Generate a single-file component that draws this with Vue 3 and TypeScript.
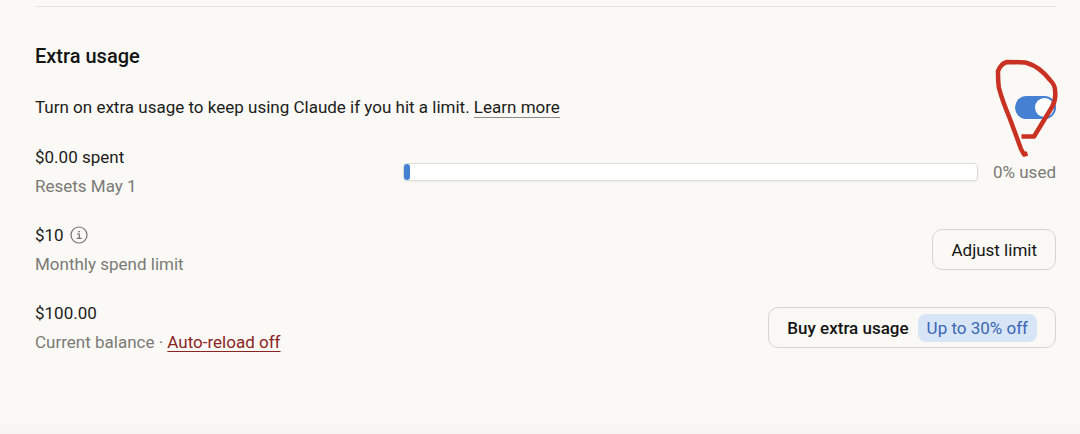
<script setup lang="ts">
import { ref } from 'vue'

const enabled = ref<boolean>(true)
const percentUsed = ref<number>(0)
</script>

<template>
  <main class="page">
    <section class="usage" aria-labelledby="usage-title">
      <h2 id="usage-title" class="title">Extra usage</h2>

      <div class="row intro">
        <p id="usage-desc" class="text">
          Turn on extra usage to keep using Claude if you hit a limit.
          <a class="learn" href="#learn">Learn more</a>
        </p>
        <div class="toggle">
          <input v-model="enabled" class="switch" type="checkbox" role="switch" aria-labelledby="usage-title" aria-describedby="usage-desc" />
          <svg class="scribble" viewBox="0 0 70 104" aria-hidden="true">
            <path
              d="M30.500 77.500 H43 L61 48 C64 43 65 38 64 31 C64 27 62 24 59 21 C52 12 43 6 36 4 C31 3 24 3 16 3 C12 4 9 7 7 12 C7 18 7 24 8 29 C10 37 14 48 19 60 L30 90 L33 95.500 L36.500 94.500"
              class="stroke-main"
            />
          </svg>
        </div>
      </div>

      <div class="row">
        <div class="info spent">
          <p class="text">$0.00 spent</p>
          <p class="text muted">Resets May 1</p>
        </div>
        <div class="meter" role="progressbar" aria-label="Extra usage spent" :aria-valuenow="percentUsed" aria-valuemin="0" aria-valuemax="100">
          <div class="fill" :style="{ width: percentUsed + '%' }"></div>
        </div>
        <span class="text muted used">{{ percentUsed }}% used</span>
      </div>

      <div class="row">
        <div class="info">
          <p class="text amount">
            $10
            <button class="hint" type="button" aria-label="About the monthly spend limit">
              <svg viewBox="0 0 18 18" aria-hidden="true">
                <circle cx="9" cy="9" r="8" />
                <path d="M7 8 H9.3 V12.3 M6.7 12.4 H11.6" />
                <circle class="dot" cx="9" cy="5.6" r="0.9" />
              </svg>
            </button>
          </p>
          <p class="text muted">Monthly spend limit</p>
        </div>
        <button class="btn" type="button">Adjust limit</button>
      </div>

      <div class="row">
        <div class="info">
          <p class="text">$100.00</p>
          <p class="text muted">Current balance · <a class="reload" href="#auto-reload">Auto-reload off</a></p>
        </div>
        <button class="btn buy" type="button">
          Buy extra usage
          <span class="offer">Up to 30% off</span>
        </button>
      </div>
    </section>
  </main>
</template>

<style>
body {
  margin: 0;
  background: #faf9f5;
}
</style>

<style scoped>
.page {
  box-sizing: border-box;
  min-height: 100vh;
  padding: 6px 24px 24px 35px;
  background: linear-gradient(to top, #f6f5f1, #faf9f5 16px);
  color: #1c1c1a;
  font-family: Roboto, "Noto Sans", sans-serif;
  font-size: 17px;
  line-height: 24px;
}
.usage {
  display: flex;
  flex-direction: column;
  gap: 25px;
  padding-top: 36px;
  border-top: 1px solid #e5e4df;
}
.title {
  margin: 0;
  font-size: 20px;
  font-weight: 500;
  line-height: 26px;
  color: #141413;
}
.text {
  margin: 0;
}
.row {
  display: flex;
  align-items: center;
  justify-content: space-between;
}
.intro {
  height: 26px;
}
.learn {
  color: inherit;
  text-decoration: none;
  border-bottom: 1px solid #8c8b86;
}
.toggle {
  position: relative;
  display: flex;
}
.switch {
  appearance: none;
  width: 41px;
  height: 23px;
  margin: 0;
  border-radius: 12px;
  background: #b9b8b2;
}
.switch::before {
  content: "";
  display: block;
  width: 19px;
  height: 19px;
  margin: 2px;
  border-radius: 50%;
  background: #ffffff;
}
.switch:checked {
  background: #4580d2;
}
.switch:checked::before {
  margin-left: 20px;
}
.scribble {
  position: absolute;
  top: -37px;
  right: -5px;
  width: 70px;
  height: 104px;
  pointer-events: none;
}
.stroke-main {
  fill: none;
  stroke: #c93222;
  stroke-width: 4.5;
  stroke-linecap: butt;
  stroke-linejoin: round;
}
.info {
  display: flex;
  flex-direction: column;
  gap: 5px;
}
.spent {
  width: 36%;
}
.muted {
  color: #7b7a75;
}
.meter {
  flex: 1;
  height: 16px;
  border: 1px solid #dddcd8;
  border-radius: 4px;
  background: #ffffff;
  box-shadow: 0 1px 2px #00000010;
}
.fill {
  min-width: 6px;
  height: 16px;
  border-radius: 3px;
  background: #4580d2;
}
.used {
  margin-left: 15px;
}
.amount {
  display: flex;
  align-items: center;
  gap: 6px;
}
.hint {
  display: flex;
  padding: 0;
  border: 0;
  background: none;
}
.hint svg {
  width: 18px;
  height: 18px;
  fill: none;
  stroke: #73726c;
  stroke-width: 1.2;
}
.hint .dot {
  fill: #73726c;
  stroke: none;
}
.btn {
  display: flex;
  align-items: center;
  gap: 9px;
  box-sizing: border-box;
  height: 41px;
  padding: 0 18px;
  border: 1px solid #d6d5d0;
  border-radius: 10px;
  background: #faf9f5;
  color: #141413;
  font: inherit;
}
.buy {
  font-weight: 500;
}
.offer {
  padding: 2px 9px;
  border-radius: 8px;
  background: #d7e5f6;
  color: #3a66b4;
  font-weight: 400;
}
.reload {
  color: #8a2424;
  text-underline-offset: 3px;
  text-decoration-thickness: 1px;
}
</style>
